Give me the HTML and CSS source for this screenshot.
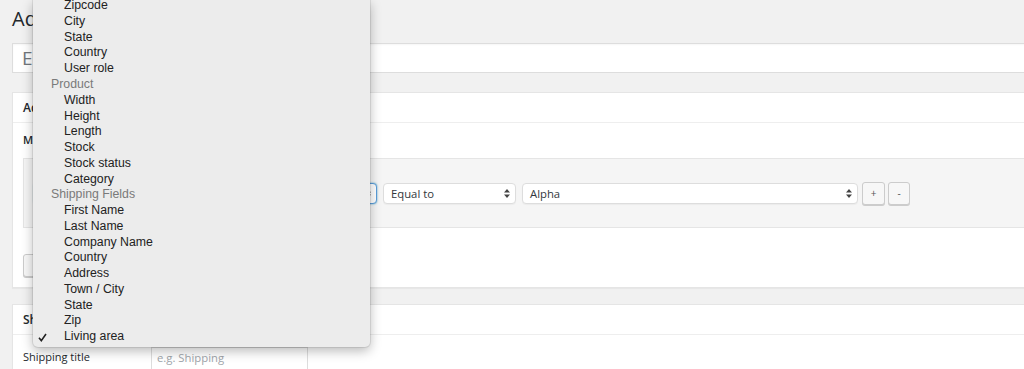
FILE: index.html
```html
<!DOCTYPE html>
<html lang="en">
<head>
  <meta charset="UTF-8" />
  <title>Add New Shipping Method</title>
  <link rel="stylesheet" href="styles.css">
</head>
<body>

<div class="wrap">
  <h1 class="page-title">Add New Shipping Method</h1>
  <div class="title-field">Enter title here</div>

  <div class="postbox">
    <div class="postbox-head">Advanced Shipping conditions</div>
    <div class="postbox-body">
      <div class="field-label">Match all of the following rules</div>
      <div class="cond-group">
        <div class="select select-focus select-first">
          <span>Living area</span>
          <svg class="arrows" width="6" height="9" viewBox="0 0 6 9"><path d="M0 3.6 L3 0 L6 3.6 Z M0 5.4 L3 9 L6 5.4 Z" /></svg>
        </div>
        <div class="select select-operator">
          <span>Equal to</span>
          <svg class="arrows" width="6" height="9" viewBox="0 0 6 9"><path d="M0 3.6 L3 0 L6 3.6 Z M0 5.4 L3 9 L6 5.4 Z" /></svg>
        </div>
        <div class="select select-value">
          <span>Alpha</span>
          <svg class="arrows" width="6" height="9" viewBox="0 0 6 9"><path d="M0 3.6 L3 0 L6 3.6 Z M0 5.4 L3 9 L6 5.4 Z" /></svg>
        </div>
        <div class="small-btn btn-add">+</div>
        <div class="small-btn btn-remove">-</div>
      </div>
      <div class="group-btn"><span class="group-plus">+</span> Add condition group</div>
    </div>
  </div>

  <div class="postbox postbox-second">
    <div class="postbox-head">Shipping settings</div>
    <div class="settings-row">
      <div class="settings-label">Shipping title</div>
      <div class="settings-input">e.g. Shipping</div>
    </div>
  </div>
</div>

<div class="menu">
  <ul class="menu-list">
    <li class="menu-item">Address</li>
    <li class="menu-item">Zipcode</li>
    <li class="menu-item">City</li>
    <li class="menu-item">State</li>
    <li class="menu-item">Country</li>
    <li class="menu-item">User role</li>
    <li class="menu-group">Product</li>
    <li class="menu-item">Width</li>
    <li class="menu-item">Height</li>
    <li class="menu-item">Length</li>
    <li class="menu-item">Stock</li>
    <li class="menu-item">Stock status</li>
    <li class="menu-item">Category</li>
    <li class="menu-group">Shipping Fields</li>
    <li class="menu-item">First Name</li>
    <li class="menu-item">Last Name</li>
    <li class="menu-item">Company Name</li>
    <li class="menu-item">Country</li>
    <li class="menu-item">Address</li>
    <li class="menu-item">Town / City</li>
    <li class="menu-item">State</li>
    <li class="menu-item">Zip</li>
    <li class="menu-item checked">
      <svg class="check" width="9" height="9" viewBox="0 0 9 9"><path d="M1 4.8 L3.3 7.6 L8 1" /></svg>
      Living area
    </li>
  </ul>
</div>

</body>
</html>
```

FILE: styles.css
```css
body {
  margin: 0;
  height: 369px;
  overflow: hidden;
  position: relative;
  background: #f1f1f1;
  font-family: "Open Sans", sans-serif;
  color: #23282d;
}

.wrap {
  width: 1060px;
  padding-left: 12px;
}

.page-title {
  margin: 5px 0 0;
  font-size: 20px;
  font-weight: 400;
  line-height: 28px;
}

.title-field {
  margin-top: 10px;
  height: 28px;
  border: 1px solid #ddd;
  background: #fff;
  padding-left: 9px;
  font-size: 19px;
  line-height: 28px;
  color: #72777c;
  box-shadow: inset 0 1px 2px rgba(0, 0, 0, 0.04);
}

.postbox {
  margin-top: 19px;
  background: #fff;
  border: 1px solid #e5e5e5;
  box-shadow: 0 1px 1px rgba(0, 0, 0, 0.04);
}

.postbox-second {
  margin-top: 16px;
}

.postbox-head {
  height: 29px;
  border-bottom: 1px solid #eee;
  padding-left: 10px;
  font-size: 12px;
  font-weight: 600;
  line-height: 29px;
}

.postbox-body {
  padding: 8px 10px 10px;
}

.field-label {
  font-size: 11px;
  font-weight: 600;
  line-height: 18px;
}

.cond-group {
  margin-top: 9px;
  background: #f5f5f5;
  border: 1px solid #e5e5e5;
  padding: 23px 10px 22px;
  display: flex;
  align-items: center;
}

.select {
  box-sizing: border-box;
  height: 21px;
  border: 1px solid #ddd;
  border-radius: 4px;
  background: #fff;
  box-shadow: 0 1px 1px rgba(0, 0, 0, 0.04);
  padding: 0 5px 0 7px;
  display: flex;
  align-items: center;
  justify-content: space-between;
  font-size: 11.3px;
  color: #32373c;
}

.arrows {
  fill: #444;
}

.select-focus {
  border-color: #5b9dd9;
  box-shadow: 0 0 2px rgba(30, 140, 190, 0.8);
}

.select-first {
  width: 343px;
}

.select-operator {
  width: 133px;
  margin-left: 6px;
}

.select-value {
  width: 336px;
  margin-left: 6px;
}

.small-btn {
  box-sizing: border-box;
  height: 23px;
  border: 1px solid #ccc;
  border-radius: 3px;
  background: #f7f7f7;
  box-shadow: 0 1px 0 #ccc;
  color: #555;
  font-size: 10px;
  line-height: 21px;
  text-align: center;
}

.btn-add {
  width: 23px;
  margin-left: 4px;
}

.btn-remove {
  width: 22px;
  margin-left: 3px;
}

.group-btn {
  display: inline-block;
  box-sizing: border-box;
  margin-top: 26px;
  height: 23px;
  padding: 0 9px;
  border: 1px solid #ccc;
  border-radius: 3px;
  background: #f7f7f7;
  box-shadow: 0 1px 0 #ccc;
  font-size: 11px;
  line-height: 21px;
  color: #555;
}

.group-plus {
  color: #c0602a;
}

.settings-row {
  display: flex;
  align-items: flex-start;
  padding: 12px 10px 0;
}

.settings-label {
  width: 128px;
  font-size: 11px;
  line-height: 20px;
}

.settings-input {
  box-sizing: border-box;
  width: 157px;
  height: 24px;
  border: 1px solid #ddd;
  background: #fff;
  padding-left: 5px;
  font-size: 11.3px;
  line-height: 20px;
  color: #a0a5aa;
}

.menu {
  position: absolute;
  top: 0;
  left: 33px;
  width: 337px;
  height: 347px;
  overflow: hidden;
  display: flex;
  flex-direction: column;
  justify-content: flex-end;
  background: #ececec;
  border-radius: 0 0 5px 5px;
  box-shadow: 0 0 0 1px rgba(0, 0, 0, 0.08), 0 4px 12px rgba(0, 0, 0, 0.28);
}

.menu-list {
  list-style: none;
  margin: 0;
  padding: 0 0 2px;
  font-family: "Liberation Sans", Arial, sans-serif;
  font-size: 12.3px;
  line-height: 15.76px;
  color: #222;
}

.menu-item {
  position: relative;
  padding-left: 31px;
}

.menu-group {
  padding-left: 18px;
  color: #7a7a7a;
}

.check {
  position: absolute;
  left: 5px;
  top: 4px;
  fill: none;
  stroke: #222;
  stroke-width: 1.6;
}
```
